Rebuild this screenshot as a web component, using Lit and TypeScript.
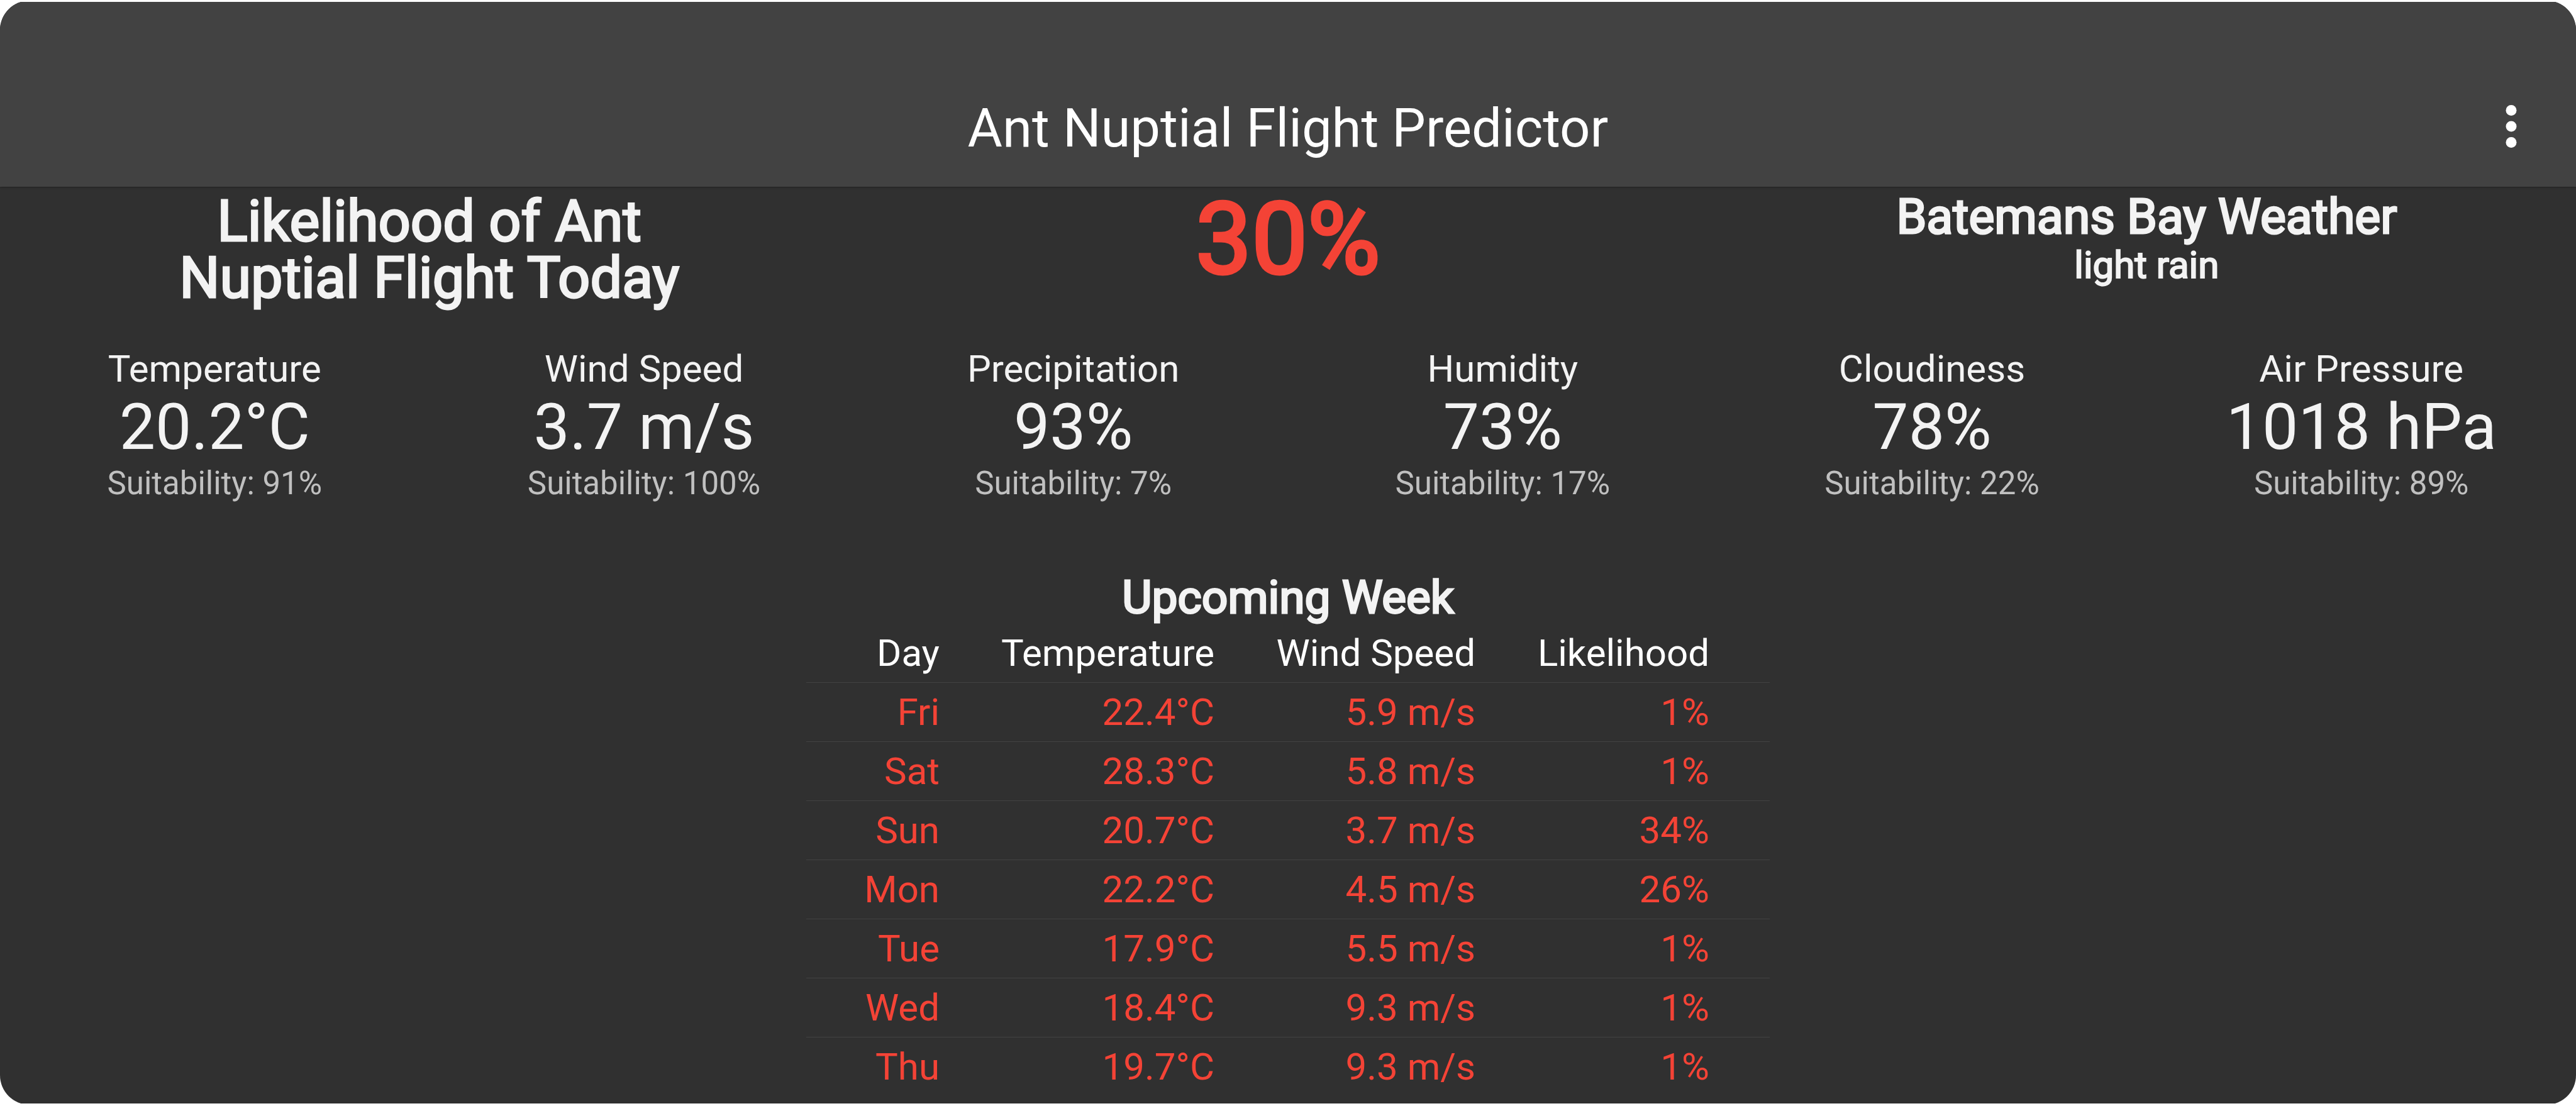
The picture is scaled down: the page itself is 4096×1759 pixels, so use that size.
import { LitElement, html, css } from "lit";
import { customElement } from "lit/decorators.js";

interface Reading {
  label: string;
  value: string;
  suitability: number;
}

interface Forecast {
  day: string;
  temperature: string;
  wind: string;
  likelihood: string;
}

const READINGS: Reading[] = [
  { label: "Temperature", value: "20.2°C", suitability: 91 },
  { label: "Wind Speed", value: "3.7 m/s", suitability: 100 },
  { label: "Precipitation", value: "93%", suitability: 7 },
  { label: "Humidity", value: "73%", suitability: 17 },
  { label: "Cloudiness", value: "78%", suitability: 22 },
  { label: "Air Pressure", value: "1018 hPa", suitability: 89 },
];

const WEEK: Forecast[] = [
  { day: "Fri", temperature: "22.4°C", wind: "5.9 m/s", likelihood: "1%" },
  { day: "Sat", temperature: "28.3°C", wind: "5.8 m/s", likelihood: "1%" },
  { day: "Sun", temperature: "20.7°C", wind: "3.7 m/s", likelihood: "34%" },
  { day: "Mon", temperature: "22.2°C", wind: "4.5 m/s", likelihood: "26%" },
  { day: "Tue", temperature: "17.9°C", wind: "5.5 m/s", likelihood: "1%" },
  { day: "Wed", temperature: "18.4°C", wind: "9.3 m/s", likelihood: "1%" },
  { day: "Thu", temperature: "19.7°C", wind: "9.3 m/s", likelihood: "1%" },
];

@customElement("app-bar")
export class AppBar extends LitElement {
  static styles = css`
    :host {
      display: block;
    }
    .bar {
      display: grid;
      grid-template-columns: 1fr auto 1fr;
      align-items: center;
      padding: 104px 52px 0;
      height: 192px;
      background: #424242;
      color: #fff;
      box-shadow: 0 1px 3px rgba(0, 0, 0, 0.35);
      position: relative;
    }
    .title {
      grid-column: 2;
      margin: 0;
      padding-top: 6px;
      font-size: 85px;
      line-height: 100px;
      font-weight: 400;
    }
    .menu {
      justify-self: end;
      display: flex;
      padding: 0;
      border: 0;
      background: none;
      color: inherit;
      cursor: pointer;
    }
    .icon {
      width: 102px;
      height: 102px;
      fill: currentColor;
    }
  `;

  render() {
    return html`
      <header class="bar">
        <h1 class="title">Ant Nuptial Flight Predictor</h1>
        <button class="menu" aria-label="Show menu">
          <svg class="icon" viewBox="0 0 24 24" aria-hidden="true">
            <circle cx="12" cy="6" r="2" />
            <circle cx="12" cy="12" r="2" />
            <circle cx="12" cy="18" r="2" />
          </svg>
        </button>
      </header>
    `;
  }
}

@customElement("today-summary")
export class TodaySummary extends LitElement {
  static styles = css`
    :host {
      display: block;
    }
    .summary {
      display: grid;
      grid-template-columns: repeat(3, 1fr);
      text-align: center;
    }
    .heading,
    .place,
    .condition,
    .chance {
      margin: 0;
      font-weight: 400;
    }
    .heading {
      font-size: 90px;
      line-height: 90px;
      -webkit-text-stroke: 3px currentColor;
    }
    .chance {
      font-size: 158px;
      line-height: 144px;
      color: #f44336;
      -webkit-text-stroke: 5px currentColor;
    }
    .place {
      font-size: 77px;
      line-height: 75px;
      -webkit-text-stroke: 3px currentColor;
    }
    .condition {
      font-size: 60px;
      line-height: 78px;
      -webkit-text-stroke: 2px currentColor;
    }
  `;

  render() {
    return html`
      <section class="summary">
        <h2 class="heading">Likelihood of Ant<br />Nuptial Flight Today</h2>
        <p class="chance">30%</p>
        <div>
          <h2 class="place">Batemans Bay Weather</h2>
          <p class="condition">light rain</p>
        </div>
      </section>
    `;
  }
}

@customElement("reading-list")
export class ReadingList extends LitElement {
  static styles = css`
    :host {
      display: block;
    }
    .readings {
      display: grid;
      grid-template-columns: repeat(6, 1fr);
      text-align: center;
    }
    .label {
      font-size: 60px;
      line-height: 70px;
    }
    .value {
      font-size: 102px;
      line-height: 114px;
    }
    .suitability {
      font-size: 51px;
      line-height: 65px;
      color: #c0c0c0;
    }
  `;

  render() {
    return html`
      <section class="readings">
        ${READINGS.map(
          (r) => html`
            <div>
              <div class="label">${r.label}</div>
              <div class="value">${r.value}</div>
              <div class="suitability">Suitability: ${r.suitability}%</div>
            </div>
          `,
        )}
      </section>
    `;
  }
}

@customElement("week-forecast")
export class WeekForecast extends LitElement {
  static styles = css`
    :host {
      display: block;
    }
    .week {
      margin: 0 auto;
      border-collapse: collapse;
      font-size: 60px;
      line-height: 93px;
      color: #f44336;
      text-align: right;
    }
    .title {
      font-size: 73px;
      line-height: 84px;
      color: #f3f3f3;
      -webkit-text-stroke: 3px currentColor;
    }
    .day {
      width: 260px;
    }
    .temperature {
      width: 437px;
    }
    .wind {
      width: 415px;
    }
    .likelihood {
      width: 420px;
    }
    .column {
      padding: 0 48px 0 0;
      font-weight: 400;
      color: #fff;
    }
    .cell {
      padding: 0 48px 0 0;
      font-weight: 400;
      border-top: 1px solid #424242;
    }
    .column:last-child,
    .cell:last-child {
      padding-right: 96px;
    }
  `;

  render() {
    return html`
      <table class="week">
        <caption class="title">Upcoming Week</caption>
        <colgroup>
          <col class="day" />
          <col class="temperature" />
          <col class="wind" />
          <col class="likelihood" />
        </colgroup>
        <thead>
          <tr>
            <th class="column" scope="col">Day</th>
            <th class="column" scope="col">Temperature</th>
            <th class="column" scope="col">Wind Speed</th>
            <th class="column" scope="col">Likelihood</th>
          </tr>
        </thead>
        <tbody>
          ${WEEK.map(
            (f) => html`
              <tr>
                <th class="cell" scope="row">${f.day}</th>
                <td class="cell">${f.temperature}</td>
                <td class="cell">${f.wind}</td>
                <td class="cell">${f.likelihood}</td>
              </tr>
            `,
          )}
        </tbody>
      </table>
    `;
  }
}

@customElement("app-root")
export class AppRoot extends LitElement {
  static styles = css`
    :host {
      display: block;
      padding: 1px 0 2px;
      background: #fff;
      font-family: Roboto, "Liberation Sans", sans-serif;
    }
    .card {
      overflow: hidden;
      border-radius: 47px;
      clip-path: inset(2px 0);
      background: #303030;
      color: #f3f3f3;
    }
    .body {
      display: flex;
      flex-direction: column;
      padding: 11px 0 14px;
    }
    .readings {
      margin-top: 64px;
    }
    .week {
      margin-top: 107px;
    }
  `;

  render() {
    return html`
      <div class="card">
        <app-bar></app-bar>
        <main class="body">
          <today-summary></today-summary>
          <reading-list class="readings"></reading-list>
          <week-forecast class="week"></week-forecast>
        </main>
      </div>
    `;
  }
}
